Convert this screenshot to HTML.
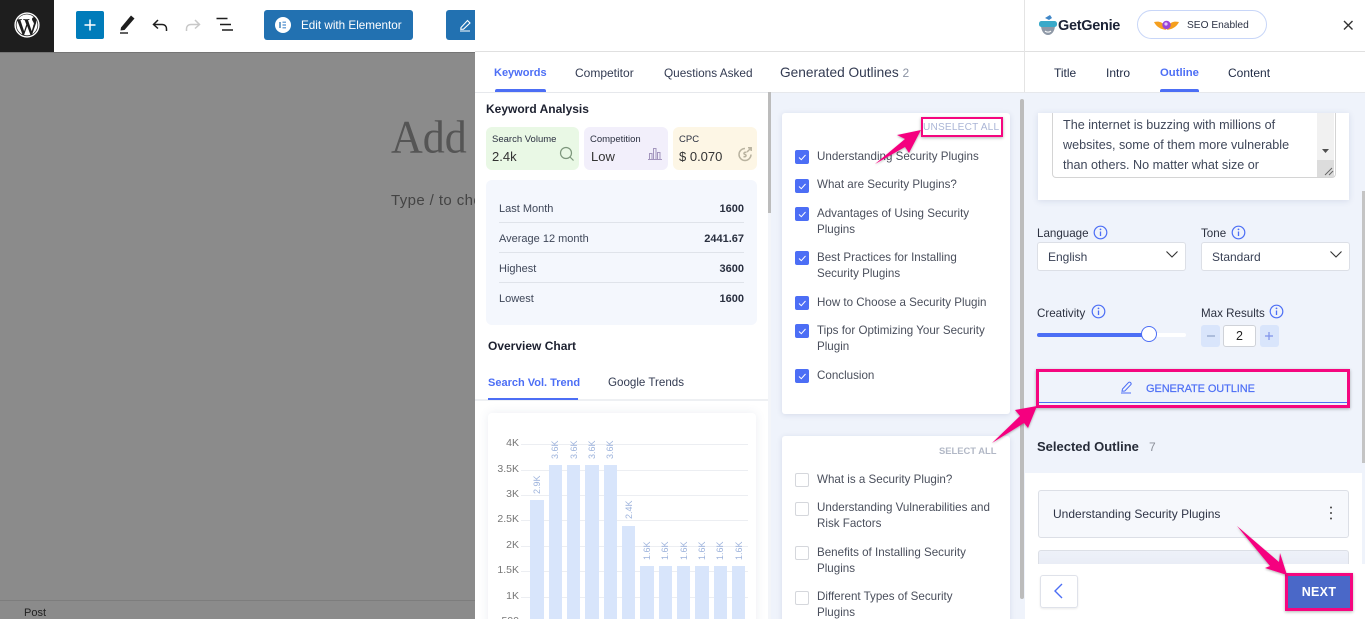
<!DOCTYPE html>
<html><head><meta charset="utf-8"><style>
html,body{margin:0;padding:0;width:1365px;height:619px;overflow:hidden;background:#fff}
body{position:relative;font-family:"Liberation Sans",sans-serif;color:#3a4256;font-size:12px}
.a{position:absolute}
.t{position:absolute;white-space:nowrap;line-height:16px;height:16px}
.b{font-weight:700}
.blue{color:#4c6ef5}
.h{color:#1f2433;font-weight:700}
.tab{color:#333b52}
.cb{position:absolute;left:795px;width:14px;height:14px;border-radius:2px;background:#4c6ef5}
.cb svg{display:block}
.un{position:absolute;left:795px;width:12px;height:12px;border:1px solid #d5d7dc;border-radius:2px;background:#fff}
.li{color:#4a4f5c;left:817px;font-size:11.600px}
.row{color:#3f4759;left:499px}
.val{position:absolute;right:621px;white-space:nowrap;line-height:16px;font-weight:700;color:#2a3040}
.ln{position:absolute;left:499px;width:245px;height:1px;background:#dfe3ea}
.grid{position:absolute;left:521px;width:227px;height:1px;background:#eceef2}
.yl{position:absolute;right:846px;font-size:10.500px;line-height:14px;color:#777}
.bar{position:absolute;width:13.4px;background:#d8e5fb}
.vl{position:absolute;font-size:9px;line-height:10px;color:#9db3dc;transform:rotate(-90deg);transform-origin:0 0;white-space:nowrap}
</style></head><body>

<!-- left dim editor -->
<div class="a" style="left:0;top:52px;width:475px;height:567px;background:#8b8b8b"></div>
<div class="a" style="left:0;top:52px;width:475px;height:1px;background:#757575"></div>
<div class="a" style="left:0;top:600px;width:475px;height:1px;background:#7d7d7d"></div>
<div class="t" style="left:24px;top:605px;color:#222;font-size:11px">Post</div>
<div class="t" style="left:391px;top:112px;font-family:'Liberation Serif',serif;font-size:44px;line-height:54px;height:54px;color:#555;transform:scaleY(1.05);transform-origin:0 100%">Add</div>
<div class="t" style="left:391px;top:192px;font-size:15px;letter-spacing:.4px;line-height:18px;color:#444;width:84px;overflow:hidden">Type / to choose</div>

<!-- toolbar -->
<div class="a" style="left:0;top:0;width:54px;height:52px;background:#1e1e1e"></div>
<svg class="a" style="left:13px;top:11px" width="28" height="28" viewBox="0 0 28 28"><circle cx="14" cy="14" r="12.6" fill="#fff"/><circle cx="14" cy="14" r="11.2" fill="#1e1e1e"/><path d="M3.5 14c0 4 2.4 7.6 5.9 9.3L4.4 9.7A10.4 10.4 0 0 0 3.5 14zM21 13.500c0-1.300-.5-2.200-.9-2.900-.6-.9-1.100-1.600-1.100-2.500 0-1 .8-1.900 1.800-1.900h.1A10.500 10.500 0 0 0 5 8.200h.7c1.100 0 2.800-.1 2.800-.1.600 0 .6.800.100.900 0 0-.6.100-1.200.1l3.700 11.100 2.200-6.700-1.600-4.400c-.6 0-1.100-.1-1.100-.1-.6 0-.5-.9 0-.9 0 0 1.700.1 2.700.1 1.100 0 2.800-.1 2.800-.1.600 0 .6.800.100.900 0 0-.6.100-1.200.1l3.700 11 1-3.400c.5-1.300.700-2.400.7-3.200zM14.200 15l-3.100 9c.9.300 1.900.4 2.900.4 1.200 0 2.400-.2 3.500-.6l-.100-.1zM23.200 9c0 .4.100.7.100 1.100 0 1-.2 2.200-.8 3.700l-3.200 9.200A10.400 10.400 0 0 0 23.200 9z" fill="#fff"/></svg>
<div class="a" style="left:76px;top:11px;width:28px;height:28px;background:#007cba;border-radius:2px"></div>
<svg class="a" style="left:76px;top:11px" width="28" height="28"><path d="M14 8.500v11M8.500 14h11" stroke="#fff" stroke-width="1.500"/></svg>
<svg class="a" style="left:118px;top:14px" width="20" height="22"><path d="M3 15.500 L13 3.500 L16.500 6.500 L6.500 18 L2.500 18.500Z" fill="#1e1e1e" transform="translate(0,-2)"/><path d="M2 19h8" stroke="#1e1e1e" stroke-width="1.400"/></svg>
<svg class="a" style="left:151px;top:17px" width="18" height="16"><path d="M7 3 L2.500 7.500 L7 11.500" fill="none" stroke="#1e1e1e" stroke-width="1.500"/><path d="M3 7.500h8c3 0 4.500 2 4.500 4.500v2" fill="none" stroke="#1e1e1e" stroke-width="1.500"/></svg>
<svg class="a" style="left:184px;top:17px" width="18" height="16"><path d="M11 3 L15.500 7.500 L11 11.500" fill="none" stroke="#c8c8c8" stroke-width="1.500"/><path d="M15 7.500H7c-3 0-4.500 2-4.500 4.500v2" fill="none" stroke="#c8c8c8" stroke-width="1.500"/></svg>
<svg class="a" style="left:216px;top:17px" width="18" height="16"><path d="M0.500 2.500h11M4 8.500h11M6 14h11" stroke="#1e1e1e" stroke-width="1.600" transform="translate(0,-1)"/></svg>
<div class="a" style="left:264px;top:10px;width:149px;height:30px;background:#2271b1;border-radius:3px"></div>
<div class="a" style="left:275px;top:17px;width:16px;height:16px;border-radius:50%;background:#fff"></div>
<svg class="a" style="left:275px;top:17px" width="16" height="16"><path d="M5 5v6" stroke="#2271b1" stroke-width="1.300"/><path d="M7.500 5.200h3.500M7.500 8h3.500M7.500 10.800h3.500" stroke="#4c8ed0" stroke-width="1.200"/></svg>
<div class="t" style="left:301px;top:18px;color:#fff;font-size:11.700px">Edit with Elementor</div>
<div class="a" style="left:446px;top:10px;width:29px;height:30px;background:#2271b1;border-radius:3px 0 0 3px"></div>
<svg class="a" style="left:459px;top:18px" width="14" height="14"><path d="M2 9.500 L8.500 2.500 L11 5 L4.500 11.200 L1.800 11.300Z M1 13h10" fill="none" stroke="#fff" stroke-width="1.100"/></svg>

<!-- GetGenie overlay -->
<div class="a" style="left:475px;top:0;width:550px;height:619px;background:#fff"></div>
<div class="a" style="left:475px;top:51px;width:890px;height:1px;background:#e0e0e0"></div>
<div class="a" style="left:1024px;top:0;width:1px;height:92px;background:#e4e4e4"></div>

<!-- left column -->
<div class="a" style="left:475px;top:92px;width:890px;height:1px;background:#e6e8ec"></div>
<div class="t b blue" style="left:494px;top:65px;font-size:11px">Keywords</div>
<div class="a" style="left:495px;top:89px;width:51px;height:3px;background:#4c6ef5;border-radius:2px 2px 0 0"></div>
<div class="t tab" style="left:575px;top:65px">Competitor</div>
<div class="t tab" style="left:664px;top:65px;font-size:11.800px">Questions Asked</div>
<div class="t tab" style="left:780px;top:65px;font-size:13.700px">Generated Outlines <span style="color:#8b93a3;font-size:12px">2</span></div>

<div class="t h" style="left:486px;top:101px;color:#1d2130">Keyword Analysis</div>
<div class="a" style="left:486px;top:127px;width:93px;height:43px;background:#e9f8e5;border-radius:6px"></div>
<div class="a" style="left:584px;top:127px;width:84px;height:43px;background:#f2effb;border-radius:6px"></div>
<div class="a" style="left:673px;top:127px;width:84px;height:43px;background:#fdf6e5;border-radius:6px"></div>
<div class="t" style="left:492px;top:132px;font-size:9.500px;color:#2b3040">Search Volume</div>
<div class="t" style="left:492px;top:149px;font-size:13px;color:#333">2.4k</div>
<div class="t" style="left:590px;top:132px;font-size:9.500px;color:#2b3040">Competition</div>
<div class="t" style="left:591px;top:149px;font-size:13px;color:#333">Low</div>
<div class="t" style="left:679px;top:132px;font-size:9.500px;color:#2b3040">CPC</div>
<div class="t" style="left:679px;top:149px;font-size:13px;color:#333">$ 0.070</div>
<svg class="a" style="left:559px;top:146px" width="16" height="16"><circle cx="7" cy="7" r="5.500" fill="none" stroke="#7d967c" stroke-width="1.200"/><path d="M11 11l3.500 3.500" stroke="#7d967c" stroke-width="1.200"/></svg>
<svg class="a" style="left:648px;top:147px" width="14" height="13" fill="none" stroke="#a395bd"><path d="M0 12.500h14M1.500 12V6.500h2.500V12M5.500 12V1.500H8V12M9.500 12V5.500H12V12"/></svg>
<svg class="a" style="left:737px;top:146px" width="16" height="16" fill="none" stroke="#b9b3a0" stroke-width="1.500"><path d="M8 2.500a6 6 0 1 0 6 6"/><path d="M10 6l4-4M11 1.800h3.200V5"/><path d="M9.500 6.500C7 5.500 6 8 8 8.500s1 3-1.500 2"/></svg>

<div class="a" style="left:486px;top:180px;width:271px;height:145px;background:#f4f7fd;border-radius:6px"></div>
<div class="t row" style="top:201px;font-size:11px">Last Month</div><div class="val" style="top:201px;font-size:11px">1600</div>
<div class="ln" style="top:222px"></div>
<div class="t row" style="top:231px;font-size:11px">Average 12 month</div><div class="val" style="top:231px;font-size:11px">2441.67</div>
<div class="ln" style="top:252px"></div>
<div class="t row" style="top:261px;font-size:11px">Highest</div><div class="val" style="top:261px;font-size:11px">3600</div>
<div class="ln" style="top:282px"></div>
<div class="t row" style="top:291px;font-size:11px">Lowest</div><div class="val" style="top:291px;font-size:11px">1600</div>

<div class="t h" style="left:488px;top:338px;color:#1d2130">Overview Chart</div>
<div class="t b blue" style="left:488px;top:375px;font-size:11px">Search Vol. Trend</div>
<div class="t tab" style="left:608px;top:375px;font-size:11.600px">Google Trends</div>
<div class="a" style="left:475px;top:399px;width:293px;height:2px;background:#eef0f3"></div>
<div class="a" style="left:488px;top:398px;width:90px;height:2px;background:#4c6ef5"></div>

<div class="a" style="left:488px;top:413px;width:268px;height:230px;background:#fff;border-radius:4px;box-shadow:0 0 10px rgba(60,80,130,.10)"></div>
<div class="grid" style="top:444px"></div><div class="grid" style="top:470px"></div><div class="grid" style="top:495px"></div><div class="grid" style="top:520px"></div><div class="grid" style="top:546px"></div><div class="grid" style="top:571px"></div><div class="grid" style="top:597px"></div>
<div class="yl" style="top:436px">4K</div><div class="yl" style="top:462px">3.5K</div><div class="yl" style="top:487px">3K</div><div class="yl" style="top:512px">2.5K</div><div class="yl" style="top:538px">2K</div><div class="yl" style="top:563px">1.5K</div><div class="yl" style="top:589px">1K</div><div class="yl" style="top:614px">500</div>
<div class="bar" style="left:530.400px;top:500px;height:119px"></div>
<div class="bar" style="left:548.700px;top:465px;height:154px"></div>
<div class="bar" style="left:567px;top:465px;height:154px"></div>
<div class="bar" style="left:585.400px;top:465px;height:154px"></div>
<div class="bar" style="left:603.700px;top:465px;height:154px"></div>
<div class="bar" style="left:622px;top:526px;height:93px"></div>
<div class="bar" style="left:640.400px;top:566px;height:53px"></div>
<div class="bar" style="left:658.700px;top:566px;height:53px"></div>
<div class="bar" style="left:677px;top:566px;height:53px"></div>
<div class="bar" style="left:695.400px;top:566px;height:53px"></div>
<div class="bar" style="left:713.700px;top:566px;height:53px"></div>
<div class="bar" style="left:732px;top:566px;height:53px"></div>
<div class="vl" style="left:532px;top:494px">2.9K</div>
<div class="vl" style="left:550px;top:459px">3.6K</div>
<div class="vl" style="left:568.500px;top:459px">3.6K</div>
<div class="vl" style="left:587px;top:459px">3.6K</div>
<div class="vl" style="left:605px;top:459px">3.6K</div>
<div class="vl" style="left:623.500px;top:519px">2.4K</div>
<div class="vl" style="left:642px;top:560px">1.6K</div>
<div class="vl" style="left:660px;top:560px">1.6K</div>
<div class="vl" style="left:678.500px;top:560px">1.6K</div>
<div class="vl" style="left:697px;top:560px">1.6K</div>
<div class="vl" style="left:715px;top:560px">1.6K</div>
<div class="vl" style="left:733.500px;top:560px">1.6K</div>

<!-- left scrollbar -->
<div class="a" style="left:768px;top:93px;width:4px;height:526px;background:#f3f5f9"></div>
<div class="a" style="left:768px;top:92px;width:3px;height:121px;background:#bcbcbc"></div>

<!-- middle column -->
<div class="a" style="left:771px;top:93px;width:254px;height:526px;background:#eff3fb"></div>
<div class="a" style="left:1020px;top:99px;width:4px;height:500px;background:#bcbcbc;border-radius:2px"></div>
<div class="a" style="left:782px;top:113px;width:228px;height:301px;background:#fff;border-radius:3px;box-shadow:0 1px 6px rgba(60,80,130,.14)"></div>
<div class="a" style="left:782px;top:436px;width:228px;height:190px;background:#fff;border-radius:3px;box-shadow:0 1px 6px rgba(60,80,130,.14)"></div>

<div class="t" style="left:923px;top:120px;font-size:10.100px;letter-spacing:.2px;color:#aab5d6">UNSELECT ALL</div>
<div class="a" style="left:921px;top:117px;width:78px;height:16px;border:2.500px solid #f5067f;box-shadow:0 1px 3px rgba(0,0,0,.3)"></div>
<div class="t b" style="left:939px;top:443px;font-size:9.400px;color:#b2b8c6">SELECT ALL</div>

<div class="cb" style="top:150px"><svg width="14" height="14"><path d="M4 7.500l2.300 2.200L10.500 5" fill="none" stroke="#fff" stroke-width="1"/></svg></div>
<div class="t li" style="top:149px">Understanding Security Plugins</div>
<div class="cb" style="top:179px"><svg width="14" height="14"><path d="M4 7.500l2.300 2.200L10.500 5" fill="none" stroke="#fff" stroke-width="1"/></svg></div>
<div class="t li" style="top:177px">What are Security Plugins?</div>
<div class="cb" style="top:207px"><svg width="14" height="14"><path d="M4 7.500l2.300 2.200L10.500 5" fill="none" stroke="#fff" stroke-width="1"/></svg></div>
<div class="t li" style="top:206px">Advantages of Using Security</div>
<div class="t li" style="top:222px">Plugins</div>
<div class="cb" style="top:251px"><svg width="14" height="14"><path d="M4 7.500l2.300 2.200L10.500 5" fill="none" stroke="#fff" stroke-width="1"/></svg></div>
<div class="t li" style="top:250px">Best Practices for Installing</div>
<div class="t li" style="top:266px">Security Plugins</div>
<div class="cb" style="top:296px"><svg width="14" height="14"><path d="M4 7.500l2.300 2.200L10.500 5" fill="none" stroke="#fff" stroke-width="1"/></svg></div>
<div class="t li" style="top:295px">How to Choose a Security Plugin</div>
<div class="cb" style="top:324px"><svg width="14" height="14"><path d="M4 7.500l2.300 2.200L10.500 5" fill="none" stroke="#fff" stroke-width="1"/></svg></div>
<div class="t li" style="top:323px">Tips for Optimizing Your Security</div>
<div class="t li" style="top:339px">Plugin</div>
<div class="cb" style="top:369px"><svg width="14" height="14"><path d="M4 7.500l2.300 2.200L10.500 5" fill="none" stroke="#fff" stroke-width="1"/></svg></div>
<div class="t li" style="top:368px">Conclusion</div>

<div class="un" style="top:473px"></div>
<div class="t li" style="top:472px">What is a Security Plugin?</div>
<div class="un" style="top:502px"></div>
<div class="t li" style="top:500px">Understanding Vulnerabilities and</div>
<div class="t li" style="top:516px">Risk Factors</div>
<div class="un" style="top:546px"></div>
<div class="t li" style="top:545px">Benefits of Installing Security</div>
<div class="t li" style="top:561px">Plugins</div>
<div class="un" style="top:591px"></div>
<div class="t li" style="top:589px">Different Types of Security</div>
<div class="t li" style="top:605px">Plugins</div>

<!-- right column -->
<div class="a" style="left:1025px;top:93px;width:340px;height:526px;background:#eff3fb"></div>
<svg class="a" style="left:1038px;top:13px" width="20" height="24"><path d="M7 5l5-3 2 3-3 2z" fill="#3f86c7"/><path d="M3 12c0 6 3 10 7 10s7-4 7-10z" fill="#8e98a6"/><rect x="1" y="8" width="18" height="6" rx="2.500" fill="#39a9c9"/><path d="M7 18c1.500 1.500 4.500 1.500 6 0" stroke="#fff" fill="none"/></svg>
<div class="t b" style="left:1058px;top:18px;font-size:14.500px;color:#1c2336;letter-spacing:-.3px">GetGenie</div>
<div class="a" style="left:1137px;top:10px;width:128px;height:27px;border:1px solid #c8d6f8;border-radius:15px;background:#fff"></div>
<svg class="a" style="left:1154px;top:18px" width="25" height="14"><path d="M0 4c5-1 8 0 10 3L12 12 8 11C5 10 2 8 0 4zM25 4c-5-1-8 0-10 3l-2 5 4-1c3-1 6-3 8-7z" fill="#f59f1e"/><circle cx="12.500" cy="7" r="4.200" fill="#9a45d8"/><circle cx="12" cy="6" r="1.600" fill="#e2c7f7"/></svg>
<div class="t" style="left:1187px;top:18px;font-size:10.200px;color:#2c3244">SEO Enabled</div>
<svg class="a" style="left:1342px;top:19px" width="12" height="12"><path d="M2 2l8.500 8.500M10.500 2L2 10.500" stroke="#333" stroke-width="1.400"/></svg>

<div class="t tab" style="left:1054px;top:65px;color:#1f2a44">Title</div>
<div class="t tab" style="left:1106px;top:65px;color:#1f2a44">Intro</div>
<div class="t b blue" style="left:1160px;top:65px;font-size:11.300px">Outline</div>
<div class="a" style="left:1160px;top:89px;width:39px;height:3px;background:#4c6ef5;border-radius:2px 2px 0 0"></div>
<div class="t tab" style="left:1228px;top:65px;color:#1f2a44">Content</div>

<div class="a" style="left:1038px;top:113px;width:311px;height:87px;background:#fff;box-shadow:0 1px 6px rgba(60,80,130,.14)"></div>
<div class="a" style="left:1052px;top:113px;width:282px;height:64px;border:solid #d4d4d4;border-width:0 1px 1px 1px;border-radius:0 0 4px 4px;background:#fff"></div>
<div class="a" style="left:1317px;top:113px;width:17px;height:64px;background:#f1f1f1"></div>
<div class="a" style="left:1317px;top:160px;width:17px;height:17px;background:#dcdcdc"></div>
<svg class="a" style="left:1317px;top:145px" width="17" height="32"><path d="M5 4h7l-3.500 4z" fill="#505050"/><path d="M8 30l7-7M12 30l4-4" stroke="#666" stroke-width="1"/></svg>
<div class="t" style="left:1063px;top:115px;line-height:20px;height:20px;color:#3f4759;font-size:12.600px">The internet is buzzing with millions of</div>
<div class="t" style="left:1063px;top:135px;line-height:20px;height:20px;color:#3f4759;font-size:12.600px">websites, some of them more vulnerable</div>
<div class="t" style="left:1063px;top:155px;line-height:20px;height:20px;color:#3f4759;font-size:12.600px">than others. No matter what size or</div>

<div class="t" style="left:1037px;top:226px;color:#2c3140;font-size:11.600px">Language</div>
<svg class="a" style="left:1093px;top:225px" width="15" height="15"><circle cx="7.500" cy="7.500" r="6.300" fill="none" stroke="#4c6ef5" stroke-width="1.200"/><path d="M7.500 6.500v4.500" stroke="#4c6ef5" stroke-width="1.300"/><circle cx="7.500" cy="4.400" r=".9" fill="#4c6ef5"/></svg>
<div class="t" style="left:1201px;top:226px;color:#2c3140;font-size:11.600px">Tone</div>
<svg class="a" style="left:1231px;top:225px" width="15" height="15"><circle cx="7.500" cy="7.500" r="6.300" fill="none" stroke="#4c6ef5" stroke-width="1.200"/><path d="M7.500 6.500v4.500" stroke="#4c6ef5" stroke-width="1.300"/><circle cx="7.500" cy="4.400" r=".9" fill="#4c6ef5"/></svg>
<div class="a" style="left:1037px;top:242px;width:147px;height:27px;background:#fff;border:1px solid #dcdfe6;border-radius:3px"></div>
<div class="a" style="left:1201px;top:242px;width:147px;height:27px;background:#fff;border:1px solid #dcdfe6;border-radius:3px"></div>
<div class="t" style="left:1048px;top:249px;color:#3a4256">English</div>
<div class="t" style="left:1212px;top:249px;color:#3a4256">Standard</div>
<svg class="a" style="left:1165px;top:250px" width="14" height="9"><path d="M1.500 1.500l5.500 5.500 5.500-5.500" fill="none" stroke="#333" stroke-width="1.100"/></svg>
<svg class="a" style="left:1329px;top:250px" width="14" height="9"><path d="M1.500 1.500l5.500 5.500 5.500-5.500" fill="none" stroke="#333" stroke-width="1.100"/></svg>

<div class="t" style="left:1037px;top:306px;color:#2c3140;font-size:11.600px">Creativity</div>
<svg class="a" style="left:1091px;top:304px" width="15" height="15"><circle cx="7.500" cy="7.500" r="6.300" fill="none" stroke="#4c6ef5" stroke-width="1.200"/><path d="M7.500 6.500v4.500" stroke="#4c6ef5" stroke-width="1.300"/><circle cx="7.500" cy="4.400" r=".9" fill="#4c6ef5"/></svg>
<div class="t" style="left:1201px;top:306px;color:#2c3140;font-size:11.600px">Max Results</div>
<svg class="a" style="left:1269px;top:304px" width="15" height="15"><circle cx="7.500" cy="7.500" r="6.300" fill="none" stroke="#4c6ef5" stroke-width="1.200"/><path d="M7.500 6.500v4.500" stroke="#4c6ef5" stroke-width="1.300"/><circle cx="7.500" cy="4.400" r=".9" fill="#4c6ef5"/></svg>
<div class="a" style="left:1037px;top:333px;width:149px;height:4px;background:#fff;border-radius:2px"></div>
<div class="a" style="left:1037px;top:333px;width:112px;height:4px;background:#4c6ef5;border-radius:2px"></div>
<div class="a" style="left:1141px;top:326px;width:14px;height:14px;border-radius:50%;background:#fff;border:1px solid #4c6ef5"></div>
<div class="a" style="left:1201px;top:325px;width:19px;height:22px;background:#d9e5fb;border-radius:3px"></div>
<div class="a" style="left:1223px;top:325px;width:31px;height:20px;background:#fff;border:1px solid #cfd2d8;border-radius:3px"></div>
<div class="a" style="left:1260px;top:325px;width:19px;height:22px;background:#d9e5fb;border-radius:3px"></div>
<svg class="a" style="left:1201px;top:325px" width="78" height="22"><path d="M6 11h8" stroke="#8ea2c8" stroke-width="1.200"/><path d="M64 11h8M68 7v8" stroke="#7f92ea" stroke-width="1.200"/></svg>
<div class="t" style="left:1236px;top:328px;font-size:12.500px;color:#222">2</div>

<div class="a" style="left:1036px;top:369px;width:308px;height:33px;border:3px solid #f5067f;background:#eff3fb;box-shadow:0 1px 3px rgba(0,0,0,.3)"></div>
<div class="a" style="left:1039px;top:402px;width:308px;height:1px;background:#4c6ef5"></div>
<svg class="a" style="left:1120px;top:380px" width="14" height="14"><path d="M2.500 9 L8.500 2.500 Q9.500 1.800 10.500 2.500 Q11.500 3.500 11 4.500 L4.800 11 L2 11.200Z M1 13h10" fill="none" stroke="#4c6ef5" stroke-width="1"/></svg>
<div class="t" style="left:1146px;top:381px;color:#4c6ef5;font-size:11px;letter-spacing:-.1px;-webkit-text-stroke:.2px #4c6ef5">GENERATE OUTLINE</div>

<div class="t h" style="left:1037px;top:439px;font-size:13px;color:#262b38">Selected Outline</div>
<div class="t" style="left:1149px;top:439px;color:#8b8f99">7</div>
<div class="a" style="left:1025px;top:473px;width:337px;height:146px;background:#fff"></div>
<div class="a" style="left:1038px;top:490px;width:309px;height:46px;background:#f6f8fc;border:1px solid #dcdfe6;border-radius:3px"></div>
<div class="t" style="left:1053px;top:506px;color:#2e3446">Understanding Security Plugins</div>
<svg class="a" style="left:1328px;top:505px" width="6" height="16" fill="#444"><circle cx="3" cy="2.500" r="1"/><circle cx="3" cy="8" r="1"/><circle cx="3" cy="13.500" r="1"/></svg>
<div class="a" style="left:1038px;top:550px;width:309px;height:40px;background:linear-gradient(#eef1f9,#dfe4f0);border:1px solid #dcdfe6;border-radius:3px"></div>
<div class="a" style="left:1025px;top:564px;width:340px;height:55px;background:#fff"></div>
<div class="a" style="left:1362px;top:191px;width:3px;height:272px;background:#c4c4c4"></div>

<div class="a" style="left:1040px;top:575px;width:36px;height:31px;background:#fff;border:1px solid #dfe2ea;border-radius:3px;box-shadow:0 1px 2px rgba(0,0,0,.08)"></div>
<svg class="a" style="left:1052px;top:582px" width="14" height="18"><path d="M10 2L3 9l7 7" fill="none" stroke="#4c6ef5" stroke-width="1.400"/></svg>
<div class="a" style="left:1285px;top:573px;width:62px;height:32px;border:3px solid #f5067f;background:#4a68c8;box-shadow:0 1px 3px rgba(0,0,0,.3);color:#fff;font-weight:700;font-size:12.500px;line-height:32px;text-align:center;letter-spacing:.3px">NEXT</div>

<!-- arrows -->
<svg class="a" style="left:0;top:0;overflow:visible" width="1365" height="619">
<defs><filter id="s" x="-20%" y="-20%" width="140%" height="140%"><feDropShadow dx="0" dy="1" stdDeviation="1" flood-opacity=".3"/></filter></defs>
<g fill="#f5067f" filter="url(#s)">
<polygon points="875,164 905,139 897,135 921,130 909,153 905,147"/>
<polygon points="992,443 1020,416 1015,410 1037,406 1028,428 1024,423"/>
<polygon points="1237,526 1279,562 1280,553 1287,575 1265,568 1270,566"/>
</g></svg>
</body></html>
